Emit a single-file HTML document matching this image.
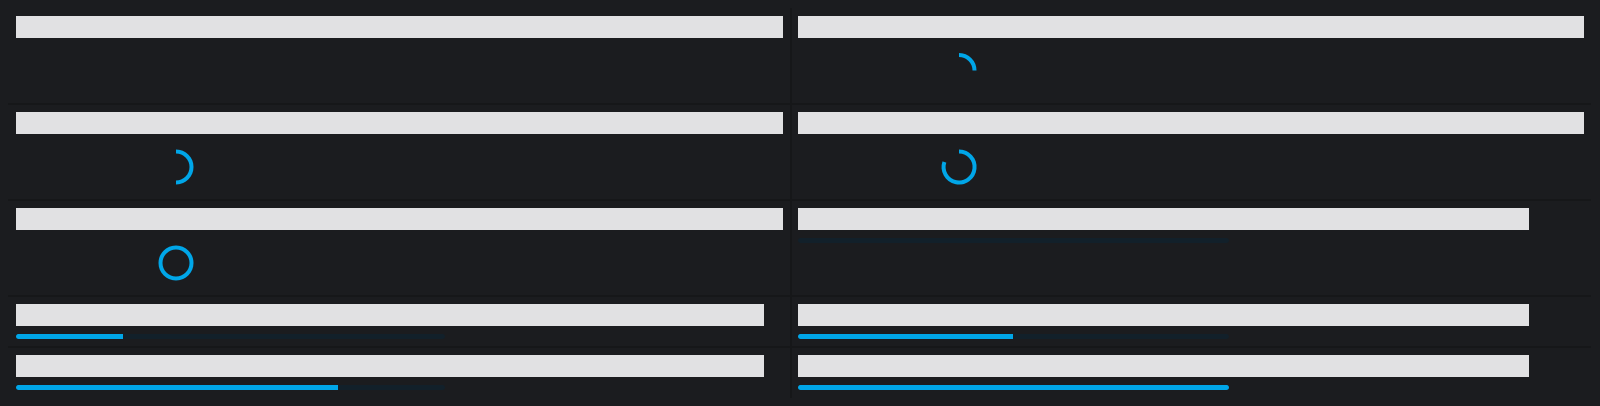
<!DOCTYPE html>
<html><head><style>
html,body{margin:0;padding:0;background:#1b1c1f;width:1600px;height:406px;overflow:hidden;position:relative}
div{position:absolute}
.b{background:#e1e1e3;height:22px}
.t{background:#12202a;height:5px;border-radius:3px}
.f{background:#00a6e8;height:5px;border-radius:3px}
.h{background:#161719;height:2px}
.v{background:#161719;width:2px}
</style></head><body>
<div class="h" style="left:8px;top:103px;width:1583px"></div>
<div class="h" style="left:8px;top:199px;width:1583px"></div>
<div class="h" style="left:8px;top:295px;width:1583px"></div>
<div class="h" style="left:8px;top:346px;width:1583px"></div>
<div class="v" style="left:790px;top:8px;height:390px"></div>

<div class="b" style="left:16px;top:16px;width:767px"></div>
<div class="b" style="left:798px;top:16px;width:786px"></div>
<div class="b" style="left:16px;top:112px;width:767px"></div>
<div class="b" style="left:798px;top:112px;width:786px"></div>
<div class="b" style="left:16px;top:208px;width:767px"></div>
<div class="b" style="left:798px;top:208px;width:731px"></div>
<div class="b" style="left:16px;top:304px;width:748px"></div>
<div class="b" style="left:798px;top:304px;width:731px"></div>
<div class="b" style="left:16px;top:355px;width:748px"></div>
<div class="b" style="left:798px;top:355px;width:731px"></div>

<div class="t" style="left:798px;top:238px;width:431px"></div>
<div class="t" style="left:16px;top:334px;width:429px"></div>
<div class="f" style="left:16px;top:334px;width:107px;border-radius:3px 0 0 3px"></div>
<div class="t" style="left:798px;top:334px;width:431px"></div>
<div class="f" style="left:798px;top:334px;width:215px;border-radius:3px 0 0 3px"></div>
<div class="t" style="left:16px;top:385px;width:429px"></div>
<div class="f" style="left:16px;top:385px;width:322px;border-radius:3px 0 0 3px"></div>
<div class="f" style="left:798px;top:385px;width:431px"></div>

<svg width="1600" height="406" style="position:absolute;left:0;top:0" fill="none" stroke="#00a6e8" stroke-width="4">
<path d="M959 55 A15.5 15.5 0 0 1 974.5 70.5"/>
<path d="M176 151.5 A15.5 15.5 0 0 1 176 182.5"/>
<path d="M959 151.5 A15.5 15.5 0 1 1 944.4 162"/>
<circle cx="176" cy="263" r="15.5"/>
</svg>
</body></html>
